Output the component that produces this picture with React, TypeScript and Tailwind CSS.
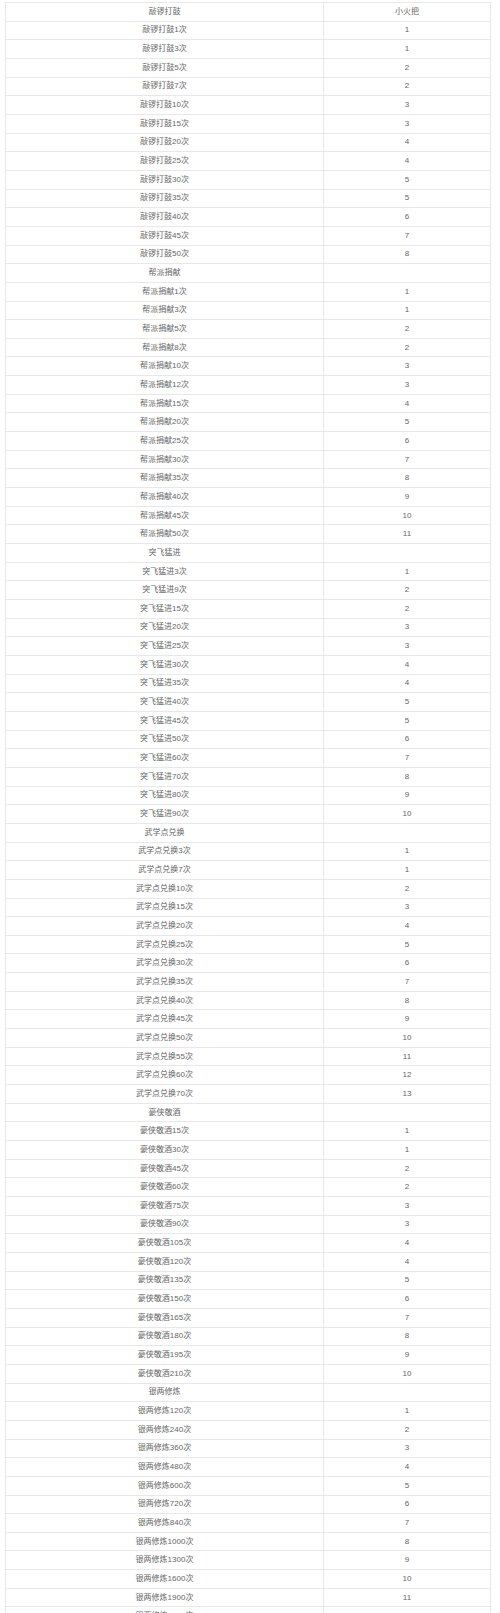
const sections: { title: string; label: string; rows: [number, number][] }[] = [
  {
    title: "敲锣打鼓",
    label: "敲锣打鼓",
    rows: [[1, 1], [3, 1], [5, 2], [7, 2], [10, 3], [15, 3], [20, 4], [25, 4], [30, 5], [35, 5], [40, 6], [45, 7], [50, 8]],
  },
  {
    title: "帮派捐献",
    label: "帮派捐献",
    rows: [[1, 1], [3, 1], [5, 2], [8, 2], [10, 3], [12, 3], [15, 4], [20, 5], [25, 6], [30, 7], [35, 8], [40, 9], [45, 10], [50, 11]],
  },
  {
    title: "突飞猛进",
    label: "突飞猛进",
    rows: [[3, 1], [9, 2], [15, 2], [20, 3], [25, 3], [30, 4], [35, 4], [40, 5], [45, 5], [50, 6], [60, 7], [70, 8], [80, 9], [90, 10]],
  },
  {
    title: "武学点兑换",
    label: "武学点兑换",
    rows: [[3, 1], [7, 1], [10, 2], [15, 3], [20, 4], [25, 5], [30, 6], [35, 7], [40, 8], [45, 9], [50, 10], [55, 11], [60, 12], [70, 13]],
  },
  {
    title: "豪侠敬酒",
    label: "豪侠敬酒",
    rows: [[15, 1], [30, 1], [45, 2], [60, 2], [75, 3], [90, 3], [105, 4], [120, 4], [135, 5], [150, 6], [165, 7], [180, 8], [195, 9], [210, 10]],
  },
  {
    title: "银两修炼",
    label: "银两修炼",
    rows: [[120, 1], [240, 2], [360, 3], [480, 4], [600, 5], [720, 6], [840, 7], [1000, 8], [1300, 9], [1600, 10], [1900, 11], [2200, 12]],
  },
];

function Row({ left, right }: { left: string; right: string }) {
  return (
    <div className="grid grid-cols-[318px_1fr] h-[18.66px] border-b border-[#e8e8e8]">
      <div className="flex items-center justify-center border-r border-[#e8e8e8]">{left}</div>
      <div className="flex items-center justify-center">{right}</div>
    </div>
  );
}

export default function App() {
  return (
    <div
      className="bg-white pt-[2px] pl-[5px] text-[8px] leading-none text-[#666]"
      style={{ fontFamily: '"Liberation Sans", "Noto Sans CJK SC", sans-serif' }}
    >
      <div className="w-[486px] border-t border-l border-r border-[#e8e8e8]">
        {sections.map((s, i) => (
          <div key={s.title}>
            <Row left={s.title} right={i === 0 ? "小火把" : ""} />
            {s.rows.map(([n, v]) => (
              <Row key={n} left={`${s.label}${n}次`} right={String(v)} />
            ))}
          </div>
        ))}
      </div>
    </div>
  );
}
